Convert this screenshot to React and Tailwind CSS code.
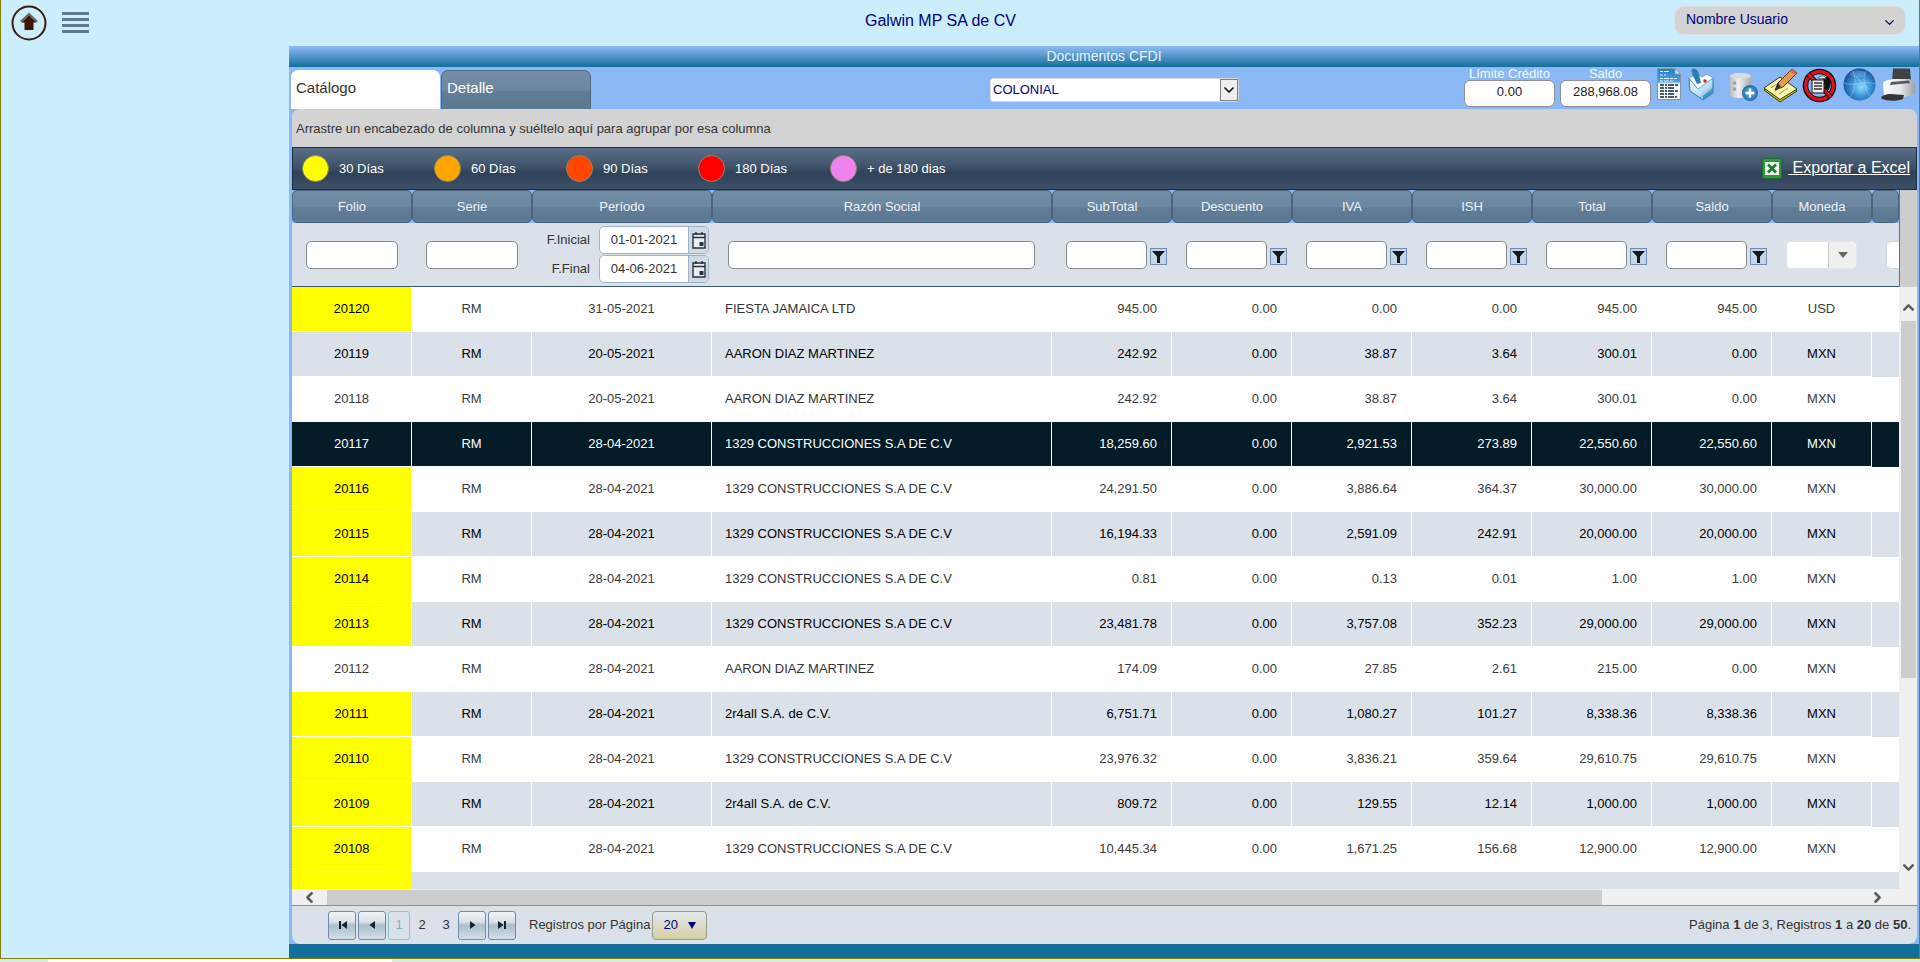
import { ChevronDown, ChevronLeft, ChevronRight, ChevronUp } from 'lucide-react'

const gridCols = 'grid grid-cols-[120px_120px_180px_340px_repeat(6,120px)_100px_1fr]'
const headerBg = 'bg-[linear-gradient(#728ca5_0%,#6c87a1_50%,#607c97_55%,#5c7993_100%)]'

const CONS = '1329 CONSTRUCCIONES S.A DE C.V'
const AARON = 'AARON DIAZ MARTINEZ'
const R4 = '2r4all S.A. de C.V.'

const rows = [
  ['20120', '31-05-2021', 'FIESTA JAMAICA LTD', '945.00', '0.00', '0.00', '945.00', '945.00', 'USD', true],
  ['20119', '20-05-2021', AARON, '242.92', '38.87', '3.64', '300.01', '0.00', 'MXN', false],
  ['20118', '20-05-2021', AARON, '242.92', '38.87', '3.64', '300.01', '0.00', 'MXN', false],
  ['20117', '28-04-2021', CONS, '18,259.60', '2,921.53', '273.89', '22,550.60', '22,550.60', 'MXN', false],
  ['20116', '28-04-2021', CONS, '24,291.50', '3,886.64', '364.37', '30,000.00', '30,000.00', 'MXN', true],
  ['20115', '28-04-2021', CONS, '16,194.33', '2,591.09', '242.91', '20,000.00', '20,000.00', 'MXN', true],
  ['20114', '28-04-2021', CONS, '0.81', '0.13', '0.01', '1.00', '1.00', 'MXN', true],
  ['20113', '28-04-2021', CONS, '23,481.78', '3,757.08', '352.23', '29,000.00', '29,000.00', 'MXN', true],
  ['20112', '28-04-2021', AARON, '174.09', '27.85', '2.61', '215.00', '0.00', 'MXN', false],
  ['20111', '28-04-2021', R4, '6,751.71', '1,080.27', '101.27', '8,338.36', '8,338.36', 'MXN', true],
  ['20110', '28-04-2021', CONS, '23,976.32', '3,836.21', '359.64', '29,610.75', '29,610.75', 'MXN', true],
  ['20109', '28-04-2021', R4, '809.72', '129.55', '12.14', '1,000.00', '1,000.00', 'MXN', true],
  ['20108', '28-04-2021', CONS, '10,445.34', '1,671.25', '156.68', '12,900.00', '12,900.00', 'MXN', true],
]

const legend = [
  ['bg-[#ffff00]', '30 Días'],
  ['bg-[#ffa500]', '60 Días'],
  ['bg-[#ff4500]', '90 Días'],
  ['bg-[#ff0000]', '180 Días'],
  ['bg-[#ee82ee]', '+ de 180 dias'],
]

const headers = ['Folio', 'Serie', 'Período', 'Razón Social', 'SubTotal', 'Descuento', 'IVA', 'ISH', 'Total', 'Saldo', 'Moneda', '']

function HomeIcon() {
  return (
    <svg width="36" height="36" viewBox="0 0 36 36" className="ml-[10px]">
      <circle cx="18" cy="18" r="16.5" fill="none" stroke="#3a1d0c" strokeWidth="2" />
      <path d="M18 7.5 L27 16 L24.5 18 L18 12 L11.5 18 L9 16 Z" fill="#6d6d6d" />
      <path d="M18 10.5 L25 17.5 L22.5 17.5 L22.5 25 L13.5 25 L13.5 17.5 L11 17.5 Z" fill="#3a1700" />
    </svg>
  )
}

function DocIcon() {
  return (
    <svg width="24" height="32" viewBox="0 0 24 32">
      <defs>
        <linearGradient id="docg" x1="0" y1="0" x2="0" y2="1">
          <stop offset="0" stopColor="#1f7fc4" />
          <stop offset="0.42" stopColor="#4aa3dd" />
          <stop offset="0.5" stopColor="#f4f9fc" />
          <stop offset="1" stopColor="#ffffff" />
        </linearGradient>
      </defs>
      <path d="M0.5 0.5 H18 L23.5 6 V31.5 H0.5 Z" fill="url(#docg)" stroke="#8296a8" />
      <path d="M18 0.5 V6 H23.5 Z" fill="#dcecf7" stroke="#8296a8" />
      <path d="M3 3.5 H13 M3 7 H9 M3 10.5 H20 M3 13 H17" stroke="#e8f4fb" strokeWidth="1.2" strokeDasharray="3 1 5 1" />
      <path d="M3 17 H21 M3 20 H17 M3 23 H21 M3 26 H18 M3 29 H20" stroke="#10283d" strokeWidth="1.5" strokeDasharray="4 1 2 1 6 1" />
    </svg>
  )
}

function EnvelopeIcon() {
  return (
    <svg width="26" height="33" viewBox="0 0 26 33">
      <defs>
        <linearGradient id="envg" x1="0" y1="0" x2="1" y2="1">
          <stop offset="0" stopColor="#ffffff" />
          <stop offset="0.6" stopColor="#b8ddf3" />
          <stop offset="1" stopColor="#2f8cc0" />
        </linearGradient>
      </defs>
      <path d="M1 10 L9 20 L25 10 L25 25 L15 32 L2 23 Z" fill="url(#envg)" stroke="#2d7ba8" />
      <path d="M1 10 L9 6 L14 9 L19 6 L25 10 L10 21 Z" fill="#ffffff" stroke="#6caed4" />
      <path d="M4 1 C7 -0.5 10 2 11 6 L13 15 L9 16 L5 8 C4 5 3 3 4 1 Z" fill="#2c7fb2" />
      <path d="M15 28 L25 20 V25 L15 32 Z" fill="#3d96c8" />
      <circle cx="17" cy="13" r="1.7" fill="#e21b1b" />
    </svg>
  )
}

function DbIcon() {
  return (
    <svg width="29" height="29" viewBox="0 0 29 29">
      <defs>
        <linearGradient id="dbg" x1="0" y1="0" x2="1" y2="0">
          <stop offset="0" stopColor="#b8bcc0" />
          <stop offset="0.4" stopColor="#eef0f1" />
          <stop offset="1" stopColor="#a9aeb3" />
        </linearGradient>
        <radialGradient id="plusg">
          <stop offset="0" stopColor="#6fb4e6" />
          <stop offset="1" stopColor="#1f6ea8" />
        </radialGradient>
      </defs>
      <path d="M1 4 C1 0 22 0 22 4 V23 C22 27 1 27 1 23 Z" fill="url(#dbg)" />
      <ellipse cx="11.5" cy="4" rx="10.5" ry="3" fill="#d9dcdf" />
      <path d="M4 11 H7 M4 17 H7" stroke="#9a9fa5" strokeWidth="3" />
      <circle cx="21" cy="21" r="8" fill="url(#plusg)" />
      <path d="M21 16.5 V25.5 M16.5 21 H25.5" stroke="#ffffff" strokeWidth="2.4" />
    </svg>
  )
}

function NoteIcon() {
  return (
    <svg width="35" height="35" viewBox="0 0 35 35">
      <path d="M1 22 L17 11 L34 23 L17 34 Z" fill="#c9b92e" stroke="#3b3a14" />
      <path d="M1 20 L17 9 L34 21 L17 31.5 Z" fill="#fdf6a8" stroke="#3b3a14" />
      <path d="M8 20 L17 14 M12 23 L21 17 M16 26 L25 20" stroke="#9a9a70" />
      <path d="M12 22 L15 15 L29 1 L34 5 L20 19 Z" fill="#e59a4a" stroke="#5b3a1c" />
      <path d="M29 1 L34 5 L32 7 L27 3 Z" fill="#e2605c" />
      <path d="M12 22 L15 15 L18 19 Z" fill="#2c2c2c" />
    </svg>
  )
}

function NoDocIcon() {
  return (
    <svg width="35" height="35" viewBox="0 0 35 35">
      <circle cx="17.5" cy="17.5" r="16.8" fill="#111111" />
      <circle cx="17.5" cy="17.5" r="15.4" fill="#e0101c" />
      <circle cx="17.5" cy="17.5" r="12.2" fill="#111111" />
      <circle cx="17.5" cy="17.5" r="11.2" fill="#8ab8f5" />
      <path d="M6 6 L29 29" stroke="#111111" strokeWidth="5" />
      <path d="M6 6 L29 29" stroke="#e0101c" strokeWidth="3" />
      <path d="M21 9 L27 9 L29 14 L27 22 L23 21 Z" fill="#111111" />
      <rect x="10" y="12" width="12" height="13" fill="#f2f2f2" stroke="#111111" />
      <path d="M12 15 H20 M12 18 H20 M12 21 H20" stroke="#333333" strokeWidth="1.3" />
      <path d="M17 9 C20 7 24 8 24 11 L21.5 10.5 C20.5 10 19 10 17 11 Z" fill="#f5f5f5" stroke="#222222" strokeWidth="0.6" />
    </svg>
  )
}

function GlobeIcon() {
  return (
    <svg width="33" height="33" viewBox="0 0 33 33">
      <defs>
        <radialGradient id="globeg" cx="0.55" cy="0.58" r="0.62">
          <stop offset="0" stopColor="#8fdcfa" />
          <stop offset="0.45" stopColor="#3f98dc" />
          <stop offset="1" stopColor="#0e468f" />
        </radialGradient>
      </defs>
      <circle cx="16.5" cy="16.5" r="16" fill="url(#globeg)" />
      <path d="M10 3 C14 12 12 22 7 29 M23 3 C19 10 22 22 27 28 M1 15 C10 19 22 12 32 16 M13 9 L24 20" fill="none" stroke="#cfe8fa" strokeWidth="0.6" strokeOpacity="0.6" />
      <ellipse cx="15" cy="6" rx="8" ry="3.5" fill="#ffffff" fillOpacity="0.18" />
    </svg>
  )
}

function PrinterIcon() {
  return (
    <svg width="35" height="34" viewBox="0 0 35 34">
      <defs>
        <linearGradient id="printg" x1="0" y1="0" x2="1" y2="0">
          <stop offset="0" stopColor="#fafafa" />
          <stop offset="0.55" stopColor="#e4e6e7" />
          <stop offset="1" stopColor="#9ea3a6" />
        </linearGradient>
      </defs>
      <path d="M12 0.5 H29 L30 13 L11 14 Z" fill="#3f4144" />
      <path d="M2 16 C2 13 6 12 12 11 L28 11 C32 12 34 14 34 17 V26 L24 29 L3 27 Z" fill="url(#printg)" />
      <path d="M10 14 L28 12.5 L29 15 L9 17 Z" fill="#55595d" />
      <path d="M0 30 C0 28 5 26 10 26 L23 27 L22 31 C16 33.5 4 33.5 0 30 Z" fill="#33353a" />
    </svg>
  )
}

function ExcelIcon() {
  return (
    <svg width="20" height="21" viewBox="0 0 20 21">
      <rect x="0.5" y="0.5" width="19" height="20" rx="2" fill="#2f9a41" stroke="#1b6e2b" />
      <rect x="3" y="4" width="14" height="13" fill="#eef6ec" />
      <path d="M6 6.5 L14 14.5 M14 6.5 L6 14.5" stroke="#1d7a32" strokeWidth="2.6" />
    </svg>
  )
}

function CalendarIcon() {
  return (
    <svg width="14" height="18" viewBox="0 0 14 18">
      <path d="M1 3 H13 V17 H1 Z" fill="#e9eef2" stroke="#26323c" strokeWidth="1.4" />
      <path d="M1 6.5 H13" stroke="#26323c" strokeWidth="1.6" />
      <path d="M4 1 V4 M10 1 V4" stroke="#26323c" strokeWidth="1.4" />
      <rect x="7.5" y="11" width="4" height="4" fill="#26323c" />
    </svg>
  )
}

function FunnelButton() {
  return (
    <span className="ml-[3px] mt-[3px] flex h-[17px] w-[17px] shrink-0 items-center justify-center border border-[#6d8cae] bg-[#c6d6e4]">
      <svg width="13" height="13" viewBox="0 0 13 13">
        <path d="M0 1 H13 L8 6.5 V13 H5 V6.5 Z" fill="#10181f" />
      </svg>
    </span>
  )
}

function PagerIcon({ kind }) {
  const paths = {
    first: 'M2 1 H4 V9 H2 Z M10 1 V9 L4.5 5 Z',
    prev: 'M8 1 V9 L2.5 5 Z',
    next: 'M3 1 V9 L8.5 5 Z',
    last: 'M1 1 V9 L6.5 5 Z M7 1 H9 V9 H7 Z',
  }
  return (
    <span className="flex h-[29px] w-[28px] items-center justify-center rounded-[3px] border border-[#6f8cac] bg-[linear-gradient(#eef2f5_0%,#dbe3e9_35%,#a9bfcd_50%,#d5dfe6_100%)]">
      <svg width="10" height="10" viewBox="0 0 10 10">
        <path d={paths[kind]} fill="#15222c" />
      </svg>
    </span>
  )
}

const textInput = 'h-[28px] rounded-[5px] border border-[#8a8a8a] bg-white'

function DateField({ label, value }) {
  return (
    <div className="flex h-[28px] items-center">
      <span className="mr-[9px] w-[58px] text-right text-[#333333]">{label}</span>
      <div className="flex h-[28px] w-[110px] overflow-hidden rounded-[5px] border border-[#9fb2c4] bg-white">
        <span className="flex flex-1 items-center justify-center text-[#333333]">{value}</span>
        <span className="flex w-[20px] items-center justify-center border-l border-[#9fb2c4] bg-[#cfdbe4]">
          <CalendarIcon />
        </span>
      </div>
    </div>
  )
}

function NumberFilter() {
  return (
    <div className="flex items-center pl-[14px]">
      <span className={`w-[81px] ${textInput}`} />
      <FunnelButton />
    </div>
  )
}

function FilterRow() {
  return (
    <div className={`${gridCols} h-[64px] border-b border-[#3b5873] bg-[#dae1e8]`}>
      <div className="flex items-center pl-[14px]">
        <span className={`w-[92px] ${textInput}`} />
      </div>
      <div className="flex items-center pl-[14px]">
        <span className={`w-[92px] ${textInput}`} />
      </div>
      <div className="flex flex-col justify-center gap-[1px]">
        <DateField label="F.Inicial" value="01-01-2021" />
        <DateField label="F.Final" value="04-06-2021" />
      </div>
      <div className="flex items-center pl-[16px]">
        <span className={`w-[307px] ${textInput}`} />
      </div>
      <NumberFilter />
      <NumberFilter />
      <NumberFilter />
      <NumberFilter />
      <NumberFilter />
      <NumberFilter />
      <div className="flex items-center pl-[14px]">
        <div className="flex h-[28px] w-[71px] rounded-[5px] border border-[#e2e6ea] bg-white">
          <span className="flex-1" />
          <span className="flex w-[28px] items-center justify-center rounded-r-[5px] border-l border-[#c9c9c9] bg-[#f0f0f0]">
            <span className="h-0 w-0 border-x-[5px] border-t-[6px] border-x-transparent border-t-[#666666]" />
          </span>
        </div>
      </div>
      <div className="flex items-center overflow-hidden pl-[14px]">
        <span className="h-[28px] w-[40px] shrink-0 rounded-[5px] border border-[#d2d6da] bg-white" />
      </div>
    </div>
  )
}

function Row({ row, index }) {
  const [folio, fecha, razon, sub, iva, ish, total, saldo, moneda, late] = row
  const selected = folio === '20117'
  const rowTone = selected
    ? 'bg-[#031c27] text-white'
    : index % 2 === 1
      ? 'bg-[#dae1e8] text-black'
      : 'bg-white text-[#3a3a3a]'
  const line = selected ? 'border-r border-[#e8edf1]' : 'border-r border-[#dae1e8]'
  const cell = `flex items-center border-b border-white ${line}`
  const num = `${cell} justify-end pr-[14px]`
  const center = `${cell} justify-center`
  return (
    <div className={`${gridCols} h-[45px] ${rowTone}`}>
      <div className={`${center} ${late ? 'bg-[#ffff00] text-black' : ''}`}>{folio}</div>
      <div className={center}>RM</div>
      <div className={center}>{fecha}</div>
      <div className={`${cell} pl-[13px] ${selected || index % 2 === 1 ? '' : 'text-[#333333]'}`}>{razon}</div>
      <div className={num}>{sub}</div>
      <div className={num}>0.00</div>
      <div className={num}>{iva}</div>
      <div className={num}>{ish}</div>
      <div className={num}>{total}</div>
      <div className={num}>{saldo}</div>
      <div className={center}>{moneda}</div>
      <div />
    </div>
  )
}

function Toolbar() {
  return (
    <div className="flex h-[42px] items-start">
      <div className="ml-[2px] mt-[3px] flex h-[39px]">
        <div className="w-[149px] rounded-t-[7px] bg-white pl-[5px] pt-[9px] text-[15px] leading-[18px] text-[#333333]">Catálogo</div>
        <div className={`ml-[1px] w-[150px] rounded-t-[7px] border border-b-0 border-[#4f6a85] pl-[5px] pt-[8px] text-[15px] leading-[18px] text-white ${headerBg}`}>Detalle</div>
      </div>
      <div className="ml-[399px] mt-[11px] flex h-[24px] w-[249px] items-center rounded-[3px] border border-[#d8d8d8] bg-white pl-[2px] text-[navy]">
        <span className="flex-1">COLONIAL</span>
        <span className="flex h-[22px] w-[18px] items-center justify-center border border-[#7f7f7f] bg-[#efefef]">
          <ChevronDown size={16} strokeWidth={2.5} color="#111111" />
        </span>
      </div>
      <div className="ml-[225px] flex w-[91px] flex-col items-center">
        <span className="h-[13px] text-[13px] leading-[13px] text-[#f4f8fc]">Límite Crédito</span>
        <span className="flex h-[27px] w-full items-center justify-center rounded-[6px] border border-[#909090] bg-white pb-[4px] text-[#222222]">0.00</span>
      </div>
      <div className="ml-[5px] flex w-[91px] flex-col items-center">
        <span className="h-[13px] text-[13px] leading-[13px] text-[#f4f8fc]">Saldo</span>
        <span className="flex h-[27px] w-full items-center justify-center rounded-[6px] border border-[#909090] bg-white pb-[4px] text-[#222222]">288,968.08</span>
      </div>
      <div className="ml-[6px] mt-[1px] flex items-start">
        <DocIcon />
        <span className="ml-[7px]"><EnvelopeIcon /></span>
        <span className="ml-[15px] mt-[4px]"><DbIcon /></span>
        <span className="ml-[5px]"><NoteIcon /></span>
        <span className="ml-[4px]"><NoDocIcon /></span>
        <span className="ml-[6px]"><GlobeIcon /></span>
        <span className="ml-[5px]"><PrinterIcon /></span>
      </div>
    </div>
  )
}

function Pager() {
  return (
    <div className="flex h-[39px] items-center rounded-b-[8px] border-t border-[#7a93b0] bg-[#dae1e8] pl-[36px] pr-[6px] text-[#333333]">
      <PagerIcon kind="first" />
      <span className="ml-[2px]"><PagerIcon kind="prev" /></span>
      <span className="ml-[2px] flex h-[29px] w-[22px] items-center justify-center rounded-[3px] border border-[#8fc0cf] text-[#7fb2c6]">1</span>
      <span className="flex w-[24px] justify-center">2</span>
      <span className="flex w-[24px] justify-center">3</span>
      <PagerIcon kind="next" />
      <span className="ml-[2px]"><PagerIcon kind="last" /></span>
      <span className="ml-[13px]">Registros por Página</span>
      <span className="ml-[2px] flex h-[29px] w-[55px] items-center justify-between rounded-[4px] border border-[#9a9a8a] bg-[linear-gradient(#e3e8ec,#d5d0a3)] pl-[10px] pr-[10px] text-[navy]">
        20
        <span className="h-0 w-0 border-x-[4px] border-t-[7px] border-x-transparent border-t-[navy]" />
      </span>
      <span className="ml-auto">
        Página <b>1</b> de 3, Registros <b>1</b> a <b>20</b> de <b>50</b>.
      </span>
    </div>
  )
}

function ExportLink() {
  return (
    <div className="ml-auto flex items-center">
      <ExcelIcon />
      <span className="ml-[6px] whitespace-pre pb-[2px] text-[16px] underline">{' Exportar a Excel'}</span>
    </div>
  )
}

export default function App() {
  return (
    <div className="flex h-[962px] w-[1920px] flex-col overflow-hidden font-['Liberation_Sans',Arial,sans-serif] text-[13px]">
      <div className="flex h-[959px] flex-col border-x border-b border-[#808000] bg-[#cceefc]">
        <header className="flex h-[46px] shrink-0 items-start">
          <div className="mt-[5px] flex w-[864px] items-start">
            <HomeIcon />
            <div className="ml-[15px] mt-[7px] flex w-[27px] flex-col gap-[3px]">
              <span className="h-[3px] bg-[#5f7a8a]" />
              <span className="h-[3px] bg-[#5f7a8a]" />
              <span className="h-[3px] bg-[#5f7a8a]" />
              <span className="h-[3px] bg-[#5f7a8a]" />
            </div>
          </div>
          <h1 className="mt-[12px] text-[16px] leading-[18px] text-[navy]">Galwin MP SA de CV</h1>
          <div className="ml-auto mr-[13px] mt-[6px] flex h-[29px] w-[232px] justify-between rounded-[10px] border border-[#dfdfdf] bg-[#d3d3d3] pl-[11px] pr-[8px] text-[14px] text-[navy]">
            <span className="pt-[2px]">Nombre Usuario</span>
            <ChevronDown size={15} strokeWidth={2} className="mt-[8px]" />
          </div>
        </header>
        <div className="flex min-h-0 flex-1">
          <aside className="w-[288px] shrink-0" />
          <section className="flex flex-1 flex-col bg-[#8ab8f5]">
            <div className="flex h-[21px] items-center justify-center bg-[linear-gradient(#90bbf5,#126f9c)] text-[14px] text-[#e8f2fa]">Documentos CFDI</div>
            <Toolbar />
            <div className="ml-[3px] mr-[2px] flex h-[835px] flex-col overflow-hidden rounded-[8px]">
              <div className="flex h-[38px] items-center bg-[#d3d3d3] pl-[4px] pt-[1px] text-[#333333]">Arrastre un encabezado de columna y suéltelo aquí para agrupar por esa columna</div>
              <div className="flex h-[43px] items-center border border-[#1d2d40] bg-[linear-gradient(#5a6f87_0%,#3f5369_45%,#2f4258_60%,#3d5068_100%)] pl-[9px] pr-[6px] text-white">
                {legend.map(([color, label]) => (
                  <div key={label} className="flex w-[132px] items-center">
                    <span className={`h-[27px] w-[27px] rounded-full border border-[#8d8d60] ${color}`} />
                    <span className="ml-[10px]">{label}</span>
                  </div>
                ))}
                <ExportLink />
              </div>
              <div className="flex h-[699px]">
                <div className="w-[1607px] overflow-hidden">
                  <div className={`${gridCols} h-[33px] text-[#eef2f6]`}>
                    {headers.map((h, i) => (
                      <div key={i} className={`flex items-center justify-center rounded-[5px] border border-[#4a647e] ${headerBg}`}>{h}</div>
                    ))}
                  </div>
                  <FilterRow />
                  {rows.map((r, i) => (
                    <Row key={r[0]} row={r} index={i} />
                  ))}
                  <div className={`${gridCols} h-[17px] bg-[#dae1e8]`}>
                    <div className="bg-[#ffff00]" />
                  </div>
                </div>
                <div className="flex w-[18px] flex-col bg-[#f0f0f0]">
                  <div className="h-[97px] shrink-0 border-l border-[#5d7690] bg-[#cdcdcd]" />
                  <div className="flex h-[34px] shrink-0 items-center justify-center pt-[6px]">
                    <ChevronUp size={17} strokeWidth={3.5} color="#5a5a5a" />
                  </div>
                  <div className="ml-[2px] mr-[1px] h-[357px] shrink-0 bg-[#cdcdcd]" />
                  <div className="mt-auto flex h-[36px] items-center justify-center pb-[8px]">
                    <ChevronDown size={17} strokeWidth={3.5} color="#5a5a5a" />
                  </div>
                </div>
              </div>
              <div className="flex h-[16px] items-center bg-[#f0f0f0]">
                <span className="flex w-[35px] justify-center">
                  <ChevronLeft size={17} strokeWidth={3.5} color="#5a5a5a" />
                </span>
                <span className="h-[15px] w-[1275px] bg-[#cdcdcd]" />
                <span className="ml-[267px]">
                  <ChevronRight size={17} strokeWidth={3.5} color="#5a5a5a" />
                </span>
              </div>
              <Pager />
            </div>
            <div className="flex-1 bg-[#126f9c]" />
          </section>
        </div>
      </div>
      <div className="flex h-[3px] bg-[#d6e8ee]">
        <span className="ml-[48px] w-[344px] bg-white" />
      </div>
    </div>
  )
}
